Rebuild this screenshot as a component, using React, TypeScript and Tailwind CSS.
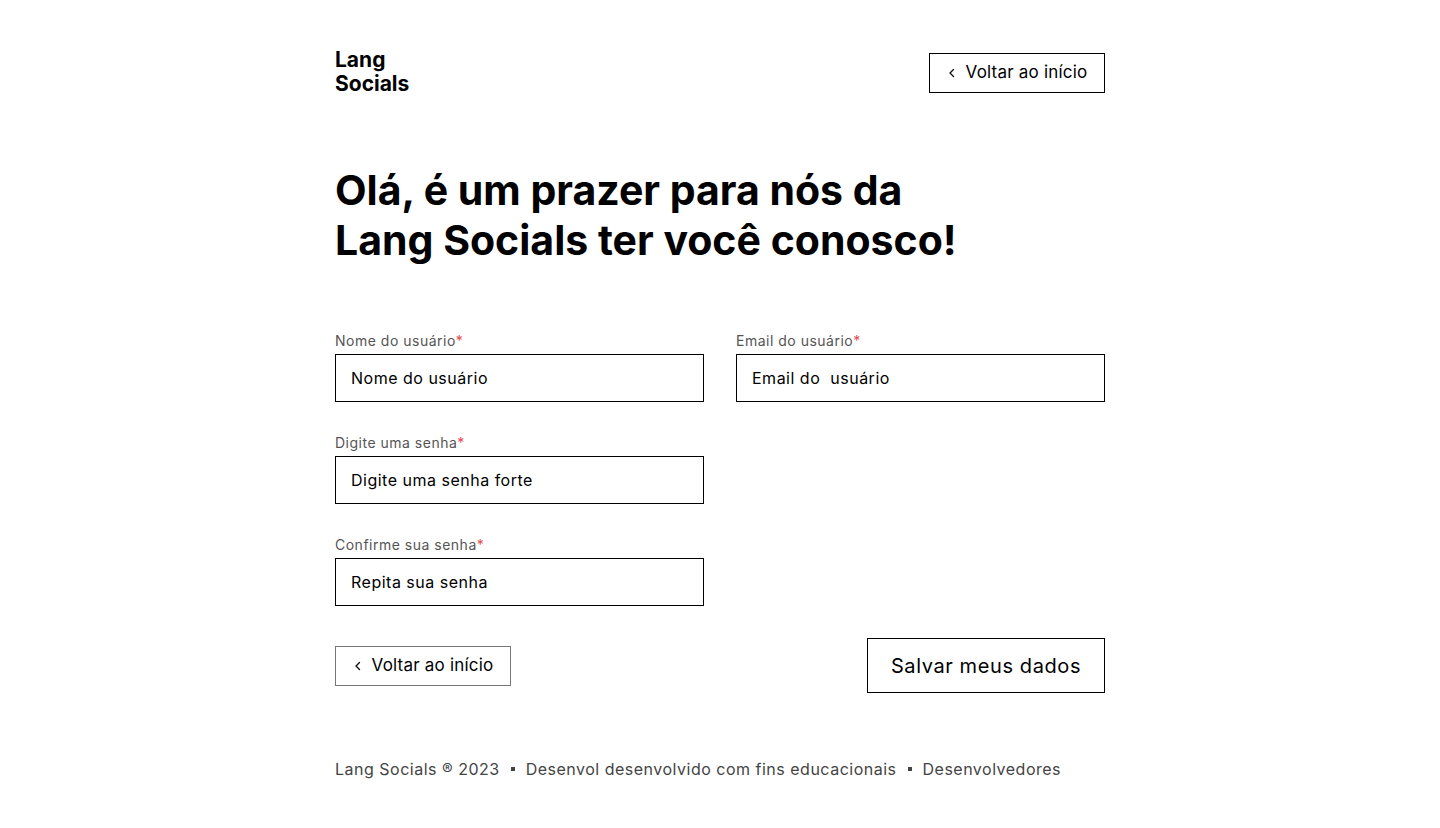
import React from 'react';

const Chevron: React.FC = () => (
  <svg width="10" height="10" viewBox="0 0 10 10" fill="none" className="shrink-0">
    <path d="M6.5 1.5 3 5l3.5 3.5" stroke="#111" strokeWidth="1.4" strokeLinecap="round" strokeLinejoin="round" />
  </svg>
);

const Field: React.FC<{ label: string; placeholder: string }> = ({ label, placeholder }) => (
  <div className="flex flex-col">
    <label className="text-[14px] leading-[18px] text-[#555] mb-[4px] tracking-[0.5px]">
      {label}
      <span className="text-[#e5484d]">*</span>
    </label>
    <input
      type="text"
      placeholder={placeholder}
      className="h-[48px] border border-black px-[15px] text-[16px] tracking-[0.5px] text-black placeholder:text-black outline-none"
    />
  </div>
);

export default function App() {
  return (
    <div className="min-h-screen bg-white font-['Inter',sans-serif] text-black">
      <div className="w-[770px] mx-auto pt-[48px]">
        {/* Header */}
        <div className="flex justify-between items-start">
          <div className="text-[21px] leading-[24px] font-bold">
            Lang
            <br />
            Socials
          </div>
          <button className="mt-[5px] h-[40px] w-[176px] border border-black flex items-center justify-center gap-[9px] text-[17px] tracking-[0.2px]">
            <Chevron />
            Voltar ao início
          </button>
        </div>

        {/* Title */}
        <h1 className="mt-[69px] text-[41px] leading-[50px] font-bold">
          Olá, é um prazer para nós da
          <br />
          Lang Socials ter você conosco!
        </h1>

        {/* Form */}
        <div className="mt-[67px] grid grid-cols-2 gap-x-[32px] gap-y-[32px]">
          <Field label="Nome do usuário" placeholder="Nome do usuário" />
          <Field label="Email do usuário" placeholder="Email do  usuário" />
          <Field label="Digite uma senha" placeholder="Digite uma senha forte" />
          <div />
          <Field label="Confirme sua senha" placeholder="Repita sua senha" />
        </div>

        {/* Actions */}
        <div className="mt-[32px] flex justify-between items-center">
          <button className="h-[40px] w-[176px] border border-[#777] flex items-center justify-center gap-[9px] text-[17px] tracking-[0.2px]">
            <Chevron />
            Voltar ao início
          </button>
          <button className="h-[55px] w-[238px] border border-black text-[20px] tracking-[0.6px]">
            Salvar meus dados
          </button>
        </div>

        {/* Footer */}
        <div className="mt-[64px] flex items-center gap-[11px] text-[16px] text-[#444] tracking-[0.5px]">
          <span>Lang Socials ® 2023</span>
          <span className="w-[4px] h-[4px] bg-[#444]" />
          <span>Desenvol desenvolvido com fins educacionais</span>
          <span className="w-[4px] h-[4px] bg-[#444]" />
          <span>Desenvolvedores</span>
        </div>
      </div>
    </div>
  );
}
